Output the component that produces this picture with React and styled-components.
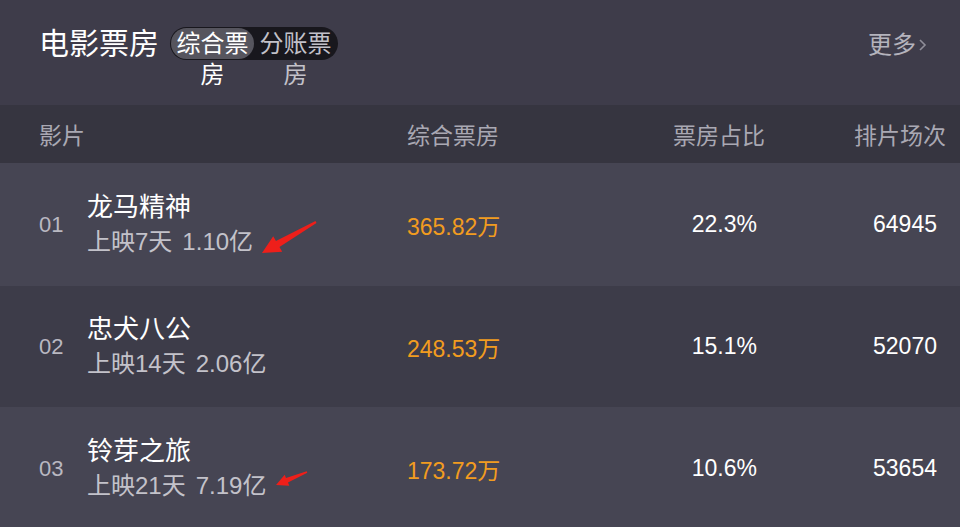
import React from "react";
import styled, { createGlobalStyle } from "styled-components";

const GlobalStyle = createGlobalStyle`
  html, body {
    margin: 0;
    padding: 0;
    background: #3e3c4a;
  }
  body {
    font-family: "Liberation Sans", "Noto Sans CJK SC", sans-serif;
  }
`;

const movies = [
  {
    rank: "01",
    name: "龙马精神",
    days: "上映7天",
    total: "1.10亿",
    box: "365.82万",
    ratio: "22.3%",
    shows: "64945",
    arrow: "big",
  },
  {
    rank: "02",
    name: "忠犬八公",
    days: "上映14天",
    total: "2.06亿",
    box: "248.53万",
    ratio: "15.1%",
    shows: "52070",
  },
  {
    rank: "03",
    name: "铃芽之旅",
    days: "上映21天",
    total: "7.19亿",
    box: "173.72万",
    ratio: "10.6%",
    shows: "53654",
    arrow: "small",
  },
];

// red annotation arrows drawn over the rows
const arrows = {
  big: {
    top: 52,
    left: 255,
    w: 70,
    h: 45,
    points:
      "60.5,6.1 20.95,26 18.2,21.2 7,38 27.2,36.8 24.45,32 61.5,7.9",
  },
  small: {
    top: 58,
    left: 270,
    w: 45,
    h: 28,
    points: "36.7,6.3 16,13 14.7,9.8 6,20 19.3,20.8 18,17.6 37.3,7.7",
  },
};

const App = () => {
  return (
    <Page>
      <GlobalStyle />
      <TopBar>
        <Title>电影票房</Title>
        <Toggle>
          <Segment $active>综合票房</Segment>
          <Segment>分账票房</Segment>
        </Toggle>
        <More>
          更多
          <svg width="9" height="14" viewBox="0 0 9 14">
            <path
              d="M2 2 L7 7 L2 12"
              fill="none"
              stroke="#8f8e99"
              strokeWidth="1.6"
            />
          </svg>
        </More>
      </TopBar>

      <HeadRow>
        <HeadCell>影片</HeadCell>
        <HeadCell>综合票房</HeadCell>
        <HeadCell $right>票房占比</HeadCell>
        <HeadCell $right>排片场次</HeadCell>
      </HeadRow>

      {movies.map((m, i) => (
        <Row key={m.rank} $odd={i % 2 === 0}>
          <FilmCell>
            <Rank>{m.rank}</Rank>
            <FilmInfo>
              <FilmName>{m.name}</FilmName>
              <FilmSub>
                {m.days}
                <Total>{m.total}</Total>
              </FilmSub>
            </FilmInfo>
          </FilmCell>
          <BoxValue>{m.box}</BoxValue>
          <Value $pad={8}>{m.ratio}</Value>
          <Value $pad={9}>{m.shows}</Value>
          {m.arrow && (
            <Arrow
              style={{ top: arrows[m.arrow].top, left: arrows[m.arrow].left }}
              width={arrows[m.arrow].w}
              height={arrows[m.arrow].h}
              viewBox={`0 0 ${arrows[m.arrow].w} ${arrows[m.arrow].h}`}
            >
              <polygon points={arrows[m.arrow].points} fill="#ee1f1a" />
            </Arrow>
          )}
        </Row>
      ))}
    </Page>
  );
};

export default App;

const Page = styled.div`
  width: 960px;
  height: 527px;
  overflow: hidden;
  background: #3e3c4a;
`;

const TopBar = styled.div`
  height: 105px;
  box-sizing: border-box;
  padding: 27px 33px 0 39px;
  display: flex;
  align-items: flex-start;
  background: #3e3c4a;
`;

const Title = styled.div`
  font-size: 30px;
  line-height: 33px;
  color: #ffffff;
  margin-right: 11px;
`;

const Toggle = styled.div`
  display: flex;
  width: 168px;
  height: 33px;
  box-sizing: border-box;
  padding: 1px;
  border-radius: 17px;
  background: #18171d;
`;

const Segment = styled.div`
  width: 83px;
  height: 31px;
  font-size: 24px;
  line-height: 31px;
  text-align: center;
  border-radius: 16px;
  color: ${(p) => (p.$active ? "#ffffff" : "#c2c1c9")};
  background: ${(p) => (p.$active ? "#56555e" : "transparent")};
`;

const More = styled.div`
  margin-left: auto;
  display: flex;
  align-items: center;
  gap: 2px;
  font-size: 24px;
  line-height: 35px;
  color: #b4b3bc;
`;

const columns = `368px 200px 158px 181px`;

const HeadRow = styled.div`
  height: 58px;
  padding-left: 39px;
  display: grid;
  grid-template-columns: ${columns};
  align-items: center;
  background: #363540;
`;

const HeadCell = styled.div`
  font-size: 23px;
  color: #a9a8b3;
  text-align: ${(p) => (p.$right ? "right" : "left")};
`;

const Row = styled.div`
  position: relative;
  height: ${(p) => (p.$odd ? "123px" : "121px")};
  padding-left: 39px;
  display: grid;
  grid-template-columns: ${columns};
  align-items: center;
  background: ${(p) => (p.$odd ? "#464553" : "#3d3c49")};
`;

const FilmCell = styled.div`
  display: flex;
  align-items: center;
`;

const Rank = styled.div`
  width: 48px;
  font-size: 22px;
  color: #b9b8c1;
`;

const FilmInfo = styled.div`
  display: flex;
  flex-direction: column;
`;

const FilmName = styled.div`
  font-size: 26px;
  line-height: 34px;
  color: #ffffff;
`;

const FilmSub = styled.div`
  font-size: 24px;
  line-height: 36px;
  color: #c3c2ca;
`;

const Total = styled.span`
  margin-left: 10px;
`;

const BoxValue = styled.div`
  font-size: 23px;
  color: #f29c1f;
`;

const Value = styled.div`
  font-size: 23px;
  color: #ffffff;
  text-align: right;
  padding-right: ${(p) => p.$pad}px;
`;

const Arrow = styled.svg`
  position: absolute;
  pointer-events: none;
`;
